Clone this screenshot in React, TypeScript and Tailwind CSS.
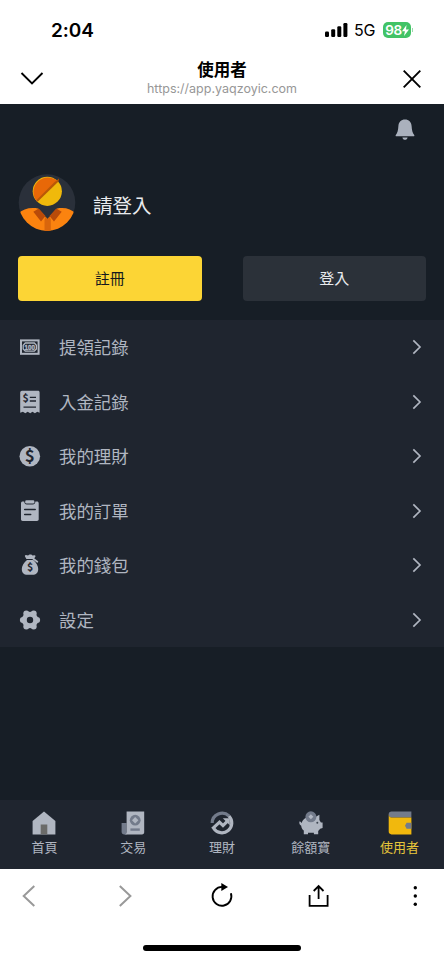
import type { ReactNode } from "react";

function Svg({ className, viewBox = "0 0 24 24", children }: { readonly className: string; readonly viewBox?: string; readonly children: ReactNode }) {
  return (
    <svg className={className} viewBox={viewBox} fill="currentColor" overflow="visible" aria-hidden="true">
      {children}
    </svg>
  );
}

const BanknoteIcon = () => (
  <Svg className="size-6">
    <rect x="3" y="5.4" width="17.6" height="13.4" fill="none" stroke="currentColor" strokeWidth="2" />
    <path d="M7.3 8h9l2.100 2.300v3.600l-2.100 2.300h-9l-2.100-2.300v-3.600z" fill="none" stroke="currentColor" strokeWidth="1.300" />
    <text x="11.800" y="14.700" fontSize="7.200" fontWeight="700" textAnchor="middle" textLength="10.500" lengthAdjust="spacingAndGlyphs" stroke="currentColor" strokeWidth=".4" className="font-['Liberation_Sans',sans-serif]">100</text>
  </Svg>
);

const ReceiptIcon = () => (
  <Svg className="size-6">
    <path d="M4 .8h16c1 0 1.600.7 1.600 1.600v20.400l-2.300-1-2.400 1.400-2.400-1.400-2.300 1.400-2.500-1.400-2.400 1.400-2.400-1.400-2.700 1V2.800c0-1.200.8-2 1.800-2z" />
    <g className="fill-[#1f252f]">
      <text x="7.700" y="12.400" fontSize="10.500" fontWeight="700" textAnchor="middle">$</text>
      <path d="M11.800 6.700H18v1.400h-6.200zM11.800 10.300H18v1.400h-6.200zM5.500 16.400H18v1.400H5.500z" />
    </g>
  </Svg>
);

const DollarIcon = () => (
  <Svg className="size-6">
    <circle cx="11.800" cy="12.200" r="10.300" />
    <text x="11.800" y="18.300" fontSize="17" fontWeight="700" textAnchor="middle" className="fill-[#1f252f]">$</text>
  </Svg>
);

const ClipboardIcon = () => (
  <Svg className="size-6">
    <path d="M4.700 2.600h1.500c.2 1.900 1.100 2.900 2.600 2.900h6c1.500 0 2.400-1 2.600-2.900H19c1 0 1.700.7 1.700 1.700v16c0 1-.7 1.700-1.700 1.700H4.700c-1 0-1.700-.7-1.700-1.700v-16c0-1 .7-1.700 1.700-1.700z" />
    <rect x="7.200" y="1.200" width="9.200" height="3.300" rx="1.300" />
    <path d="M6.700 10.400h10.500M6.700 15.500h6" className="stroke-[#1f252f]" strokeWidth="1.500" strokeLinecap="round" />
  </Svg>
);

const MoneyBagIcon = () => (
  <Svg className="size-6">
    <path d="M8.400 6 7 3.600c-.4-.8.200-1.600 1-1.500l2 .4L11.500 1.400h1.800l1.200 1.100 2-.3c.8-.1 1.300.7.900 1.400L15.900 6z" />
    <path d="m15.300 5.800 4 2.900" stroke="currentColor" strokeWidth="1.800" strokeLinecap="round" />
    <path d="M9 6.900h6.200c3 2.500 5 6 5 9.100 0 3.800-2 5.800-5.800 5.800H9.500c-3.700 0-5.700-2-5.700-5.800 0-3.100 2.200-6.600 5.200-9.100z" />
    <text x="12" y="18.300" fontSize="10.500" fontWeight="700" textAnchor="middle" className="fill-[#1f252f]">$</text>
  </Svg>
);

const GearIcon = () => (
  <Svg className="size-6">
    <circle cx="12" cy="12" r="5.700" fill="none" stroke="currentColor" strokeWidth="5" />
    <circle cx="4.900" cy="12" r="3" />
    <circle cx="19.100" cy="12" r="3" />
    <circle cx="8.300" cy="5.600" r="3" />
    <circle cx="15.700" cy="5.600" r="3" />
    <circle cx="8.300" cy="18.400" r="3" />
    <circle cx="15.700" cy="18.400" r="3" />
  </Svg>
);

const HomeIcon = () => (
  <Svg className="size-6">
    <path d="M12 .4 23.400 10v13.400H.6V10z" />
    <path d="M8.700 13.500h6.600v9.900H8.700z" className="fill-[#6b6b69]" />
  </Svg>
);

const TradeIcon = () => (
  <Svg className="size-6">
    <path d="M.6 12h5v11.400H3.200C1.700 23.400.6 22.300.6 21z" className="fill-[#737b8b]" />
    <path d="M5.600.6h17.600v20.600c0 1.300-.9 2.200-2.200 2.200H3.400c1.500 0 2.200-.9 2.200-2.400z" />
    <circle cx="14.200" cy="9.200" r="5.400" className="fill-[#737b8b]" />
    <path d="m14.200 6 3.200 3.200-3.200 3.200L11 9.200z" />
    <path d="M9.400 17.400h9.400v2.400H9.400z" className="fill-[#737b8b]" />
  </Svg>
);

const FinanceIcon = () => (
  <Svg className="size-6">
    <g fill="none" strokeWidth="3.200">
      <path d="M2.200 12a9.900 9.900 0 0 1 16.800-7" className="stroke-[#737b8b]" />
      <path d="M19 5A9.900 9.900 0 1 1 3.800 17.600" stroke="currentColor" />
      <path d="m2.300 17.800 7.200-6.700 3.500 3.500 4.500-4.500" stroke="currentColor" />
    </g>
    <path d="M12.800 7.300h7v7z" />
  </Svg>
);

const PiggyIcon = () => (
  <Svg className="size-6">
    <path d="M.4 10.500c1.200 0 1.700.6 2.300 1.500C3.800 8.200 7.500 5.600 12 5.600c1.400 0 2.700.2 3.900.7l4.500-2.600v5.200l1.500 2.700h1.700v5.300l-2.400.9-2 2.300v3.200h-4.300v-1.500H9v1.500H4.800v-3.700c-1.500-1.200-2.400-2.900-2.600-4.900-1.300-.6-2.200-1.900-1.800-4.200z" />
    <circle cx="11.900" cy="5.800" r="5.500" className="fill-[#737b8b]" />
    <path d="m11.900 3.300 2.500 2.500-2.500 2.500-2.500-2.500z" />
    <circle cx="18.300" cy="11.800" r="1" className="fill-[#3e4551]" />
  </Svg>
);

const WalletIcon = () => (
  <Svg className="size-6">
    <path d="M.7 3.200C.7 1.500 1.800.6 3.500.6h19.900v5.900H3.500C1.800 6.500.7 5.400.7 3.200z" className="fill-[#737b8b]" />
    <path d="M.7 3.300c0 2 1.100 3.200 2.800 3.200h19.900v16.900H3.500C1.800 23.400.7 22.300.7 20.600z" className="fill-[#f1b80d]" />
    <path d="M18.600 11.800h4.800v6h-4.800l-1.600-3z" className="fill-[#737b8b]" />
  </Svg>
);

const MENU = [
  { label: "提領記錄", icon: <BanknoteIcon /> },
  { label: "入金記錄", icon: <ReceiptIcon /> },
  { label: "我的理財", icon: <DollarIcon /> },
  { label: "我的訂單", icon: <ClipboardIcon /> },
  { label: "我的錢包", icon: <MoneyBagIcon /> },
  { label: "設定", icon: <GearIcon /> },
];

const TABS = [
  { label: "首頁", icon: <HomeIcon /> },
  { label: "交易", icon: <TradeIcon /> },
  { label: "理財", icon: <FinanceIcon /> },
  { label: "餘額寶", icon: <PiggyIcon /> },
  { label: "使用者", icon: <WalletIcon />, active: true },
];

function StatusBar() {
  return (
    <div className="flex h-[60px] items-center pl-[51px] pr-[31px] font-['Inter','Liberation_Sans',sans-serif]">
      <span className="pt-px text-[19px] font-semibold leading-6 tracking-[-0.1px]">2:04</span>
      <div className="ml-auto flex items-center">
        <Svg className="h-[14px] w-[23px]" viewBox="0 0 23 14">
          <rect x="0" y="8.5" width="4" height="5.5" rx="1.2" />
          <rect x="6.2" y="6.2" width="4" height="7.8" rx="1.2" />
          <rect x="12.3" y="3.3" width="4" height="10.7" rx="1.2" />
          <rect x="18.4" y="0" width="4" height="14" rx="1.2" />
        </Svg>
        <span className="ml-[6px] w-[22px] text-[16px] leading-6 tracking-[-0.3px]">5G</span>
        <div className="ml-[7px] flex h-4 w-[28px] items-center justify-center rounded-[5px] bg-[#42c366] text-white">
          <span className="text-[13.5px] font-semibold leading-4 tracking-[-0.4px]">98</span>
          <Svg className="h-[11px] w-[7px]" viewBox="0 0 7 11">
            <path d="M4.500 0 0 6.200h2.900L2 11l5-6.500H4z" />
          </Svg>
        </div>
        <span className="ml-px h-1 w-px bg-[#9bd9ac]" />
      </div>
    </div>
  );
}

function BrowserHeader() {
  return (
    <div className="flex h-[43.5px] justify-between px-5">
      <Svg className="mt-[6px] size-6">
        <path d="m1.500 7 10.500 10.500L22.500 7" fill="none" stroke="currentColor" strokeWidth="1.900" />
      </Svg>
      <div className="flex flex-col items-center">
        <h1 className="text-[16.5px] font-bold leading-[19px]">使用者</h1>
        <p className="text-[12.5px] leading-[19px] text-[#979797] font-['Inter','Liberation_Sans',sans-serif]">https://app.yaqzoyic.com</p>
      </div>
      <Svg className="mt-[7px] size-6">
        <path d="m3.700 3.700 16.600 16.600m0-16.600L3.700 20.300" stroke="currentColor" strokeWidth="1.900" />
      </Svg>
    </div>
  );
}

function Avatar() {
  return (
    <svg className="size-[58px]" viewBox="0 0 58 58" aria-hidden="true">
      <defs>
        <clipPath id="avatar">
          <circle cx="29" cy="28.6" r="28.3" />
        </clipPath>
      </defs>
      <g clipPath="url(#avatar)">
        <path d="M0 0h58v58H0z" className="fill-[#2a303a]" />
        <path d="M0 39.500c5-4.500 12-6.500 20-5L29.500 45 39 34.500c8-1.500 14 .5 19 5V58H0z" className="fill-[#fb830f]" />
        <path d="m15.300 37.800 5.500-3.300 6.700 7.500-4.500 5.500zM43.700 37.800l-5.500-3.300-6.700 7.500 4.500 5.500z" className="fill-[#b94b09]" />
        <path d="m27.500 42.800 2 2.200 2-2.200 1.300 2.700V58h-6.300V45.500z" className="fill-[#d9660c]" />
      </g>
      <circle cx="29.300" cy="17.300" r="14.600" className="fill-[#f0b90b]" />
      <path d="M39.600 7a14.600 14.600 0 0 0-20.600 20.600z" className="fill-[#e86808]" />
      <path d="m41 4.500-4.600 3.700-18 18 1.200 1.600L40.500 7.500z" className="fill-[#b95807]" />
    </svg>
  );
}

function Profile() {
  return (
    <section className="h-[216.5px] px-[18px]">
      <div className="flex h-[70.5px] justify-end pr-[9px] pt-[14.5px]">
        <Svg className="size-6 text-[#aab1bd]">
          <path d="M12 1.400c-3.900 0-6.300 2.600-6.600 6.500-.3 4-.8 6.700-2.600 9-.5.700-.1 1.400.7 1.400h17c.8 0 1.200-.7.700-1.400-1.800-2.300-2.300-5-2.600-9-.3-3.900-2.700-6.500-6.600-6.500zM9.400 19.500h5.200c-.3 1.500-1.300 2.300-2.600 2.300s-2.300-.8-2.600-2.300z" />
        </Svg>
      </div>
      <div className="flex items-center gap-[17px]">
        <Avatar />
        <span className="pt-1 text-[19.5px] leading-7 text-[#e9ebee]">請登入</span>
      </div>
      <div className="mt-6 grid grid-cols-2 gap-[41px] text-[15px]">
        <button className="h-[45px] rounded bg-[#fcd535] text-[#15191e]">註冊</button>
        <button className="h-[45px] rounded bg-[#2b3139] text-[#e9ebee]">登入</button>
      </div>
    </section>
  );
}

function Menu() {
  return (
    <ul className="bg-[#1f252f] text-[#b0b6c1]">
      {MENU.map((item) => (
        <li key={item.label} className="flex h-[54.5px] items-center pl-[18px] pr-[19px]">
          {item.icon}
          <span className="ml-[17px] text-[17.4px] leading-6">{item.label}</span>
          <Svg className="ml-auto h-4 w-4">
            <path d="m6.500 2.200 10 9.800-10 9.800" fill="none" stroke="currentColor" strokeWidth="2.500" />
          </Svg>
        </li>
      ))}
    </ul>
  );
}

function TabBar() {
  return (
    <nav className="mt-auto grid h-[69px] grid-cols-5 bg-[#1f252f] pt-[11px] text-[#b0b6c1]">
      {TABS.map((tab) => (
        <div key={tab.label} className="flex flex-col items-center">
          {tab.icon}
          <span className={tab.active ? "mt-[3px] text-[13px] leading-[18px] text-[#e7c53a]" : "mt-[3px] text-[13px] leading-[18px]"}>{tab.label}</span>
        </div>
      ))}
    </nav>
  );
}

function BrowserToolbar() {
  return (
    <footer className="flex h-[91px] flex-col items-center bg-white text-black">
      <div className="flex w-full justify-between px-[17px] pt-[15px]">
        <Svg className="size-6 text-[#999]">
          <path d="M17.300 2 6.700 12l10.600 10" fill="none" stroke="currentColor" strokeWidth="2" />
        </Svg>
        <Svg className="size-6 text-[#999]">
          <path d="m5.800 2 10.600 10L5.800 22" fill="none" stroke="currentColor" strokeWidth="2" />
        </Svg>
        <Svg className="size-6">
          <path d="M12.500 2.900H12a9.400 9.400 0 1 0 8.900 6.400" fill="none" stroke="currentColor" strokeWidth="1.900" />
          <path d="m11.300-1 6.700 4-6.700 4z" />
        </Svg>
        <Svg className="size-6">
          <path d="M2.600 11v10.800h18V11M11.600 15V2.300M6.700 7l4.900-4.900L16.500 7" fill="none" stroke="currentColor" strokeWidth="1.800" />
        </Svg>
        <Svg className="size-6">
          <circle cx="12.300" cy="3.700" r="1.700" />
          <circle cx="12.300" cy="12" r="1.700" />
          <circle cx="12.300" cy="20.300" r="1.700" />
        </Svg>
      </div>
      <div className="mt-auto mb-[9px] h-[6px] w-[158px] rounded-full bg-black" />
    </footer>
  );
}

export default function App() {
  return (
    <div className="flex h-[960px] w-[444px] flex-col overflow-hidden bg-[#171e26] font-['Noto_Sans_CJK_TC',sans-serif]">
      <header className="bg-white text-black">
        <StatusBar />
        <BrowserHeader />
      </header>
      <Profile />
      <Menu />
      <TabBar />
      <BrowserToolbar />
    </div>
  );
}
